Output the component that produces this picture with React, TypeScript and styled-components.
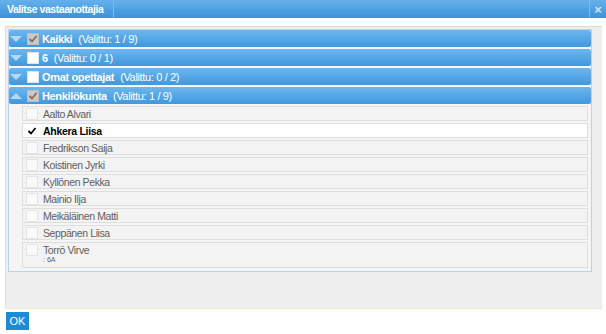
import React from "react";
import styled, { createGlobalStyle } from "styled-components";

const GlobalStyle = createGlobalStyle`
  html, body {
    margin: 0;
    padding: 0;
    background: #ffffff;
    font-family: "Liberation Sans", Arial, sans-serif;
  }
`;

const Dialog = styled.div`
  width: 606px;
  height: 334px;
  display: flex;
  flex-direction: column;
  background: #ffffff;
`;

const TitleBar = styled.div`
  height: 18px;
  display: flex;
  align-items: stretch;
  background: linear-gradient(#66b1ec, #3d92d9);
  color: #fff;
  font-size: 10.5px;
  letter-spacing: -0.45px;
  font-weight: bold;
  .title {
    width: 106px;
    padding-left: 7px;
    display: flex;
    align-items: center;
    white-space: nowrap;
    border-right: 1px solid #78bbee;
  }
  .spacer {
    flex: 1;
  }
  .close {
    width: 16px;
    border-left: 1px solid #78bbee;
    display: flex;
    align-items: center;
    justify-content: center;
    font-size: 13px;
    letter-spacing: 0;
    color: #cfe6f8;
  }
`;

const Content = styled.div`
  margin: 8px 4px 0 5px;
  height: 283px;
  box-sizing: border-box;
  background: #eeeeee;
  border-top: 1px solid #e3dcb8;
  border-left: 1px solid #e8e2c4;
  border-bottom: 1px solid #efe9cf;
  padding: 2px 10px 0 2px;
`;

const Panel = styled.div`
  border: 1px solid #bcd2ea;
  background: #f5f5f5;
  padding-bottom: 3px;
`;

const Header = styled.div<{ $first?: boolean }>`
  height: 17px;
  margin-top: ${(p) => (p.$first ? "0" : "2px")};
  display: flex;
  align-items: center;
  background: linear-gradient(#6cb6ee, #4098de);
  border-radius: 2px;
  color: #fff;
  font-size: 11px;
  letter-spacing: -0.35px;
  white-space: nowrap;
  b {
    margin-right: 6px;
  }
`;

const Arrow = styled.span<{ $up?: boolean }>`
  width: 0;
  height: 0;
  margin: 0 5px 0 1px;
  border-left: 6px solid transparent;
  border-right: 6px solid transparent;
  ${(p) =>
    p.$up
      ? "border-bottom: 6px solid #b2d9f5;"
      : "border-top: 6px solid #b2d9f5;"}
`;

const Box = styled.span<{ $muted?: boolean }>`
  width: 12px;
  height: 12px;
  box-sizing: border-box;
  margin-right: 3px;
  display: inline-flex;
  align-items: center;
  justify-content: center;
  flex-shrink: 0;
  background: ${(p) => (p.$muted ? "#c9c9c9" : "#ffffff")};
  border: 1px solid ${(p) => (p.$muted ? "#bdbdbd" : "#e2e2e2")};
`;

const List = styled.div`
  padding: 2px 3px 0 13px;
  display: flex;
  flex-direction: column;
  gap: 2px;
`;

const Row = styled.div<{ $selected?: boolean; $tall?: boolean }>`
  height: ${(p) => (p.$tall ? "26px" : "15px")};
  box-sizing: border-box;
  display: flex;
  align-items: ${(p) => (p.$tall ? "flex-start" : "center")};
  padding-left: 3px;
  padding-top: ${(p) => (p.$tall ? "1px" : "0")};
  background: ${(p) => (p.$selected ? "#ffffff" : "#f3f3f3")};
  border: 1px solid #dedede;
  font-size: 10.5px;
  letter-spacing: ${(p) => (p.$selected ? "-0.3px" : "-0.4px")};
  white-space: nowrap;
  color: ${(p) => (p.$selected ? "#000" : "#5e5e5e")};
  font-weight: ${(p) => (p.$selected ? "bold" : "normal")};
  ${Box} {
    margin-right: 5px;
    border-color: ${(p) => (p.$selected ? "transparent" : "#e4e4e4")};
    background: ${(p) => (p.$selected ? "transparent" : "#fafafa")};
  }
  .sub {
    font-size: 7px;
    line-height: 8px;
    letter-spacing: 0;
    font-weight: normal;
  }
`;

const Footer = styled.div`
  padding: 2px 0 0 6px;
`;

const OkButton = styled.button`
  width: 23px;
  height: 18px;
  padding: 0;
  border: none;
  background: #1b8bd8;
  color: #fff;
  font-family: "Liberation Sans", Arial, sans-serif;
  font-size: 11px;
`;

const Check = ({ color }: { color: string }) => (
  <svg width="10" height="10" viewBox="0 0 10 10">
    <path d="M1.5 5 L4 7.5 L8.5 2" fill="none" stroke={color} strokeWidth="1.8" />
  </svg>
);

const groups = [
  { name: "Kaikki", count: "1 / 9", state: "muted" },
  { name: "6", count: "0 / 1", state: "empty" },
  { name: "Omat opettajat", count: "0 / 2", state: "empty" },
  { name: "Henkilökunta", count: "1 / 9", state: "muted", open: true },
];

const people = [
  { name: "Aalto Alvari" },
  { name: "Ahkera Liisa", selected: true },
  { name: "Fredrikson Saija" },
  { name: "Koistinen Jyrki" },
  { name: "Kyllönen Pekka" },
  { name: "Mainio Ilja" },
  { name: "Meikäläinen Matti" },
  { name: "Seppänen Liisa" },
  { name: "Torrö Virve", sub: ": 6A" },
];

export default function App() {
  return (
    <Dialog>
      <GlobalStyle />
      <TitleBar>
        <div className="title">Valitse vastaanottajia</div>
        <div className="spacer" />
        <div className="close">×</div>
      </TitleBar>
      <Content>
        <Panel>
          {groups.map((g, i) => (
            <React.Fragment key={g.name}>
              <Header $first={i === 0}>
                <Arrow $up={g.open} />
                <Box $muted={g.state === "muted"}>
                  {g.state === "muted" && <Check color="#8a6a5a" />}
                </Box>
                <b>{g.name}</b>
                <span>(Valittu: {g.count})</span>
              </Header>
              {g.open && (
                <List>
                  {people.map((p) => (
                    <Row key={p.name} $selected={p.selected} $tall={!!p.sub}>
                      <Box>{p.selected && <Check color="#000" />}</Box>
                      <div>
                        <div>{p.name}</div>
                        {p.sub && <div className="sub">{p.sub}</div>}
                      </div>
                    </Row>
                  ))}
                </List>
              )}
            </React.Fragment>
          ))}
        </Panel>
      </Content>
      <Footer>
        <OkButton>OK</OkButton>
      </Footer>
    </Dialog>
  );
}
